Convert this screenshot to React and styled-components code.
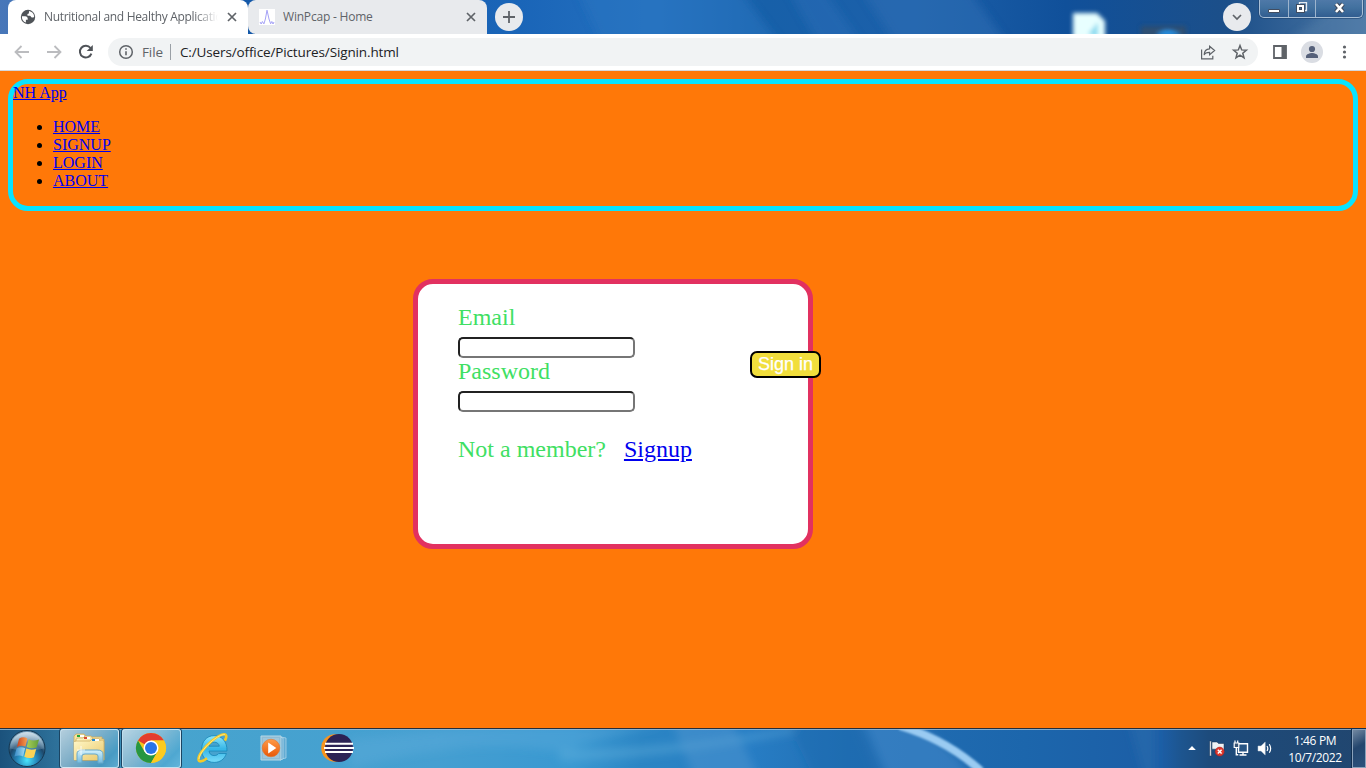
import React from "react";
import styled, { createGlobalStyle, css } from "styled-components";

const uiFont = `"Open Sans", "Noto Sans", sans-serif`;

const GlobalStyle = createGlobalStyle`
  * { box-sizing: border-box; }
  body { margin: 0; overflow: hidden; font-family: "Liberation Serif", serif; }
`;

const Screen = styled.div`
  width: 1366px;
  height: 768px;
  display: flex;
  flex-direction: column;
  overflow: hidden;
`;

/* ---------- Tab strip ---------- */

const TabStrip = styled.div`
  position: relative;
  flex: 0 0 34px;
  display: flex;
  padding-left: 8px;
  background: #1a63b5;
  overflow: hidden;
`;

const Backdrop = styled.svg`
  position: absolute;
  inset: 0;
  display: block;
`;

const Tab = styled.div`
  position: relative;
  display: flex;
  align-items: center;
  width: ${(p) => p.$width}px;
  height: 34px;
  padding: 0 10px 0 ${(p) => (p.$active ? 12 : 11)}px;
  background: ${(p) => (p.$active ? "#fff" : "linear-gradient(#fff, #fff) 0 0 / 0 0, #e8eaed")};
  border-radius: ${(p) => (p.$active ? "8px 8px 0 0" : "8px 8px 0 8px")};
`;

const TabTitle = styled.span`
  flex: 1;
  min-width: 0;
  margin-left: 8px;
  overflow: hidden;
  white-space: nowrap;
  font: 12px/16px ${uiFont};
  letter-spacing: ${(p) => p.$spacing}px;
  color: #5f6368;
  ${(p) => p.$fade && css`
    mask-image: linear-gradient(90deg, #000 calc(100% - 24px), transparent);
  `}
`;

const CloseGlyph = styled.svg`
  flex: none;
  margin-left: 8px;
`;

const RoundButton = styled.div`
  position: relative;
  display: flex;
  align-items: center;
  justify-content: center;
  flex: none;
  width: 28px;
  height: 28px;
  margin: 3px 0 0 ${(p) => p.$left || 0}px;
  border-radius: 50%;
  background: #e8eaed;
`;

const StripSpacer = styled.div`
  flex: 1;
`;

const WindowControls = styled.div`
  position: relative;
  display: flex;
  flex: none;
  width: 104px;
  height: 18px;
  margin: 0 3px 0 8px;
  border: 1px solid #a9bfd6;
  border-top: 0;
  border-radius: 0 0 5px 5px;
  background: linear-gradient(#4f79a8, #42719f 45%, #315d90);
  box-shadow: 0 0 0 1px #1c3f6b88;
`;

const ControlCell = styled.div`
  display: flex;
  align-items: center;
  justify-content: center;
  width: ${(p) => p.$width}px;
  padding-bottom: 2px;
  border-right: ${(p) => (p.$last ? "0" : "1px solid #9db4cd")};
`;

/* ---------- Toolbar ---------- */

const Toolbar = styled.div`
  flex: 0 0 37px;
  display: flex;
  align-items: center;
  padding: 0 12px 0 12px;
  border-bottom: 1px solid #d5d7da;
  background: #fff;
`;

const NavIcons = styled.div`
  display: flex;
  gap: 12px;
  width: 96px;
`;

const AddressBar = styled.div`
  display: flex;
  align-items: center;
  width: 1150px;
  height: 28px;
  padding: 0 9px;
  border-radius: 14px;
  background: #f1f3f4;
  font: 13.5px/18px ${uiFont};
`;

const Scheme = styled.span`
  margin-left: 7px;
  letter-spacing: -0.1px;
  color: #5f6368;
`;

const SchemeDivider = styled.span`
  width: 1px;
  height: 16px;
  margin: 0 9px 0 7px;
  background: #9aa0a6;
`;

const Address = styled.span`
  flex: 1;
  letter-spacing: -0.13px;
  color: #202124;
`;

const AddressActions = styled.div`
  display: flex;
  gap: 14px;
`;

const BrowserActions = styled.div`
  display: flex;
  align-items: center;
  flex: 1;
  justify-content: space-between;
  padding-left: 13px;
`;

const Avatar = styled.div`
  display: flex;
  width: 22px;
  height: 22px;
  margin-right: 2px;
  border-radius: 50%;
  background: #dadde3;
`;

/* ---------- Web page ---------- */

const Page = styled.main`
  flex: 0 0 657px;
  padding: 8px;
  background: #ff7808;
`;

const SiteHeader = styled.header`
  width: 1350px;
  height: 132px;
  border: 5px solid #08e3ff;
  border-radius: 20px;
  font-size: 16px;
  line-height: 18px;
`;

const Link = styled.a`
  color: #0000ee;
  text-decoration: underline;
`;

const Menu = styled.ul`
  margin: 16px 0;
  padding-left: 40px;
`;

const Card = styled.form`
  position: relative;
  width: 400px;
  height: 270px;
  margin: 68px 0 0 405px;
  padding: 20px 40px;
  border: 5px solid #e23160;
  border-radius: 20px;
  background: #fff;
  color: #40df63;
  font-size: 24px;
  line-height: 27px;
`;

const Label = styled.label`
  display: block;
`;

const Field = styled.input`
  display: block;
  width: 177px;
  height: 21px;
  margin: 6px 0 0;
  padding: 1px 2px;
  border: 2px inset #767676;
  border-radius: 5px;
  background: #fff;
`;

const MemberRow = styled.div`
  display: flex;
  gap: 18px;
  margin-top: 24px;
  white-space: nowrap;
`;

const SignInButton = styled.button`
  position: absolute;
  top: 67px;
  left: 332px;
  width: 71px;
  height: 27px;
  padding: 0;
  border: 2px solid #000;
  border-radius: 7px;
  background: #f1de3c;
  color: #fff;
  font: 18px/21px "Liberation Sans", Arial, sans-serif;
  -webkit-text-stroke: 0.25px #fff;
  white-space: nowrap;
`;

/* ---------- Taskbar ---------- */

const Taskbar = styled.footer`
  position: relative;
  flex: 0 0 40px;
  display: flex;
  background: #2878bb;
  overflow: hidden;
`;

const StartButton = styled.div`
  position: relative;
  width: 54px;
  height: 40px;
  margin-right: 6px;
`;

const TaskItem = styled.div`
  position: relative;
  display: flex;
  align-items: center;
  justify-content: center;
  width: 59px;
  height: 39px;
  margin: 1px 3px 0 0;
  padding: 0 2px 1px 0;
  border-radius: 3px;
  ${(p) => p.$open && css`
    border: 1px solid #e1f1f9bb;
    box-shadow: 0 0 0 1px #1b4563;
    background: linear-gradient(135deg, #d5e5edcc, #9fc6d9aa 45%, #58acd477 80%, #7bc3e588);
  `}
`;

const TaskSpacer = styled.div`
  flex: 1;
`;

const Tray = styled.div`
  position: relative;
  display: flex;
  align-items: center;
  width: 92px;
  padding-top: 2px;
`;

const Clock = styled.div`
  position: relative;
  width: 74px;
  padding-top: 4px;
  color: #fff;
  text-align: center;
  font: 12px/17px ${uiFont};
  letter-spacing: -0.35px;
`;

const ShowDesktop = styled.div`
  position: relative;
  width: 14px;
  margin: 1px 0 0;
  border: 1px solid #8ba2bb;
  outline: 1px solid #102e50;
  background: linear-gradient(150deg, #7288a1, #24466e 45%, #2b517c);
`;

function StripBackdrop() {
  return (
    <Backdrop width="1366" height="34" aria-hidden="true">
      <defs>
        <linearGradient id="strip">
          <stop offset="0" stopColor="#4877b9" />
          <stop offset=".18" stopColor="#1458a8" />
          <stop offset=".38" stopColor="#1a65b8" />
          <stop offset=".48" stopColor="#2571bf" />
          <stop offset=".56" stopColor="#1760a9" />
          <stop offset=".67" stopColor="#1c60aa" />
          <stop offset=".78" stopColor="#10509a" />
          <stop offset=".9" stopColor="#1c4f89" />
          <stop offset="1" stopColor="#4d78a5" />
        </linearGradient>
        <filter id="soft" x="-30%" y="-30%" width="160%" height="160%"><feGaussianBlur stdDeviation="4" /></filter>
        <filter id="iconSoft" x="-50%" y="-50%" width="200%" height="200%"><feGaussianBlur stdDeviation="2.2" /></filter>
      </defs>
      <rect width="1366" height="34" fill="url(#strip)" />
      <g filter="url(#soft)">
        <path d="M575-15H735L785 50H605Z" fill="#2c76c2" opacity=".5" />
        <path d="M785-15H820L866 50H822Z" fill="#2d73bc" opacity=".4" />
        <path d="M858-15H965L1012 50H900Z" fill="#2e6eb5" opacity=".55" />
        <path d="M1290 40L1350-5H1380V40Z" fill="#5a83ac" opacity=".4" />
      </g>
      <g filter="url(#iconSoft)">
        <path d="M1073 13H1097L1105 21V46H1073Z" fill="#e8ffff" />
        <path d="M1088 34L1098 22V38Z" fill="#8fdcf0" />
        <path d="M1141 26H1186V38H1141Z" fill="#334f6a" opacity=".8" />
        <path d="M1156 35Q1167 26 1181 35Z" fill="#219cf5" />
      </g>
    </Backdrop>
  );
}

function TaskBackdrop() {
  return (
    <Backdrop width="1366" height="40" aria-hidden="true">
      <defs>
        <linearGradient id="bar">
          <stop offset="0" stopColor="#1b527c" />
          <stop offset=".04" stopColor="#2d7099" />
          <stop offset=".12" stopColor="#47a4ce" />
          <stop offset=".32" stopColor="#459fd1" />
          <stop offset=".42" stopColor="#3998d1" />
          <stop offset=".47" stopColor="#2b85c4" />
          <stop offset=".55" stopColor="#277dc4" />
          <stop offset=".62" stopColor="#226fb4" />
          <stop offset=".75" stopColor="#1c66ac" />
          <stop offset=".85" stopColor="#1c5ea6" />
          <stop offset=".865" stopColor="#1d558f" />
          <stop offset=".885" stopColor="#1d4b7c" />
          <stop offset="1" stopColor="#21466f" />
        </linearGradient>
        <filter id="barSoft" x="-20%" y="-50%" width="140%" height="200%"><feGaussianBlur stdDeviation="4" /></filter>
        <filter id="raySoft" x="-20%" y="-20%" width="140%" height="140%"><feGaussianBlur stdDeviation="1.3" /></filter>
      </defs>
      <rect width="1366" height="40" fill="url(#bar)" />
      <g filter="url(#barSoft)">
        <path d="M350 40Q470 8 560 24Q620 5 665-2H540Q440 1 350 12Z" fill="#62b1df" opacity=".3" />
        <path d="M560 21Q650 24 800-2L794 5Q670 30 560 33Z" fill="#6db8df" opacity=".35" />
        <path d="M670-10H730L760 52H695Z" fill="#599bd2" opacity=".38" />
        <path d="M785-10L815 52H880L855-10Z" fill="#1c6aad" opacity=".4" />
        <path d="M862-10H910Q950 17 974 52H888Z" fill="#4a91d1" opacity=".45" />
        <path d="M1128-10H1155V52H1145Z" fill="#3775b3" opacity=".35" />
      </g>
      <path d="M900 -2Q947 12 981 43" fill="none" stroke="#9acbf2" strokeWidth="8" filter="url(#raySoft)" />
      <rect width="1366" height="1" fill="#252d3b" />
      <rect y="1" width="1366" height="1" fill="#9dbbd1" opacity=".8" />
    </Backdrop>
  );
}

const Close = () => (
  <CloseGlyph width="12" height="12" viewBox="0 0 12 12" fill="none" stroke="#5f6368" strokeWidth="1.7">
    <path d="M2 2l8 8M10 2l-8 8" />
  </CloseGlyph>
);

const Globe = () => (
  <svg width="16" height="16" viewBox="0 0 16 16">
    <circle cx="8" cy="8" r="7.2" fill="#4f5358" />
    <path d="M1.9 7.3h3.4c1.5 0 2.4 1 2.4 2.3v1.1H5.9v2.9C3.3 12.8 1.7 10.3 1.9 7.3ZM9 2c2.9.4 5 2.7 5.2 5.7-.6.7-1.2.9-2.1.8-1.5 0-1-1.8-2.2-1.8H7.7c-.8-1-.3-2.2 1.2-2.2Z" fill="#fff" />
  </svg>
);

const Pulse = () => (
  <svg width="16" height="16" viewBox="0 0 16 16">
    <path fill="#fff" d="M0 0h16v16H0z" />
    <path d="M1 13l1.2 2 1.2-2.5 1.5 2.4L6.4 10 8 1.2 10 10l1.6 4.8 1.2-2.3L14 15l1-2" fill="none" stroke="#a5a2f7" strokeWidth="1" />
  </svg>
);

const Arrow = ({ flip }) => (
  <svg width="20" height="20" viewBox="0 0 20 20" fill="none" stroke="#bbbcbf" strokeWidth="1.8">
    <path d={flip ? "M3 10h13M10.5 4l6 6-6 6" : "M17 10H4M9.5 4l-6 6 6 6"} />
  </svg>
);

const Reload = () => (
  <svg width="20" height="20" viewBox="0 0 20 20">
    <path d="M15.4 11.6A5.9 5.9 0 1 1 14.5 6" fill="none" stroke="#4f5358" strokeWidth="2" />
    <path d="M16.8 3v6.1h-6.1Z" fill="#4f5358" />
  </svg>
);

const Info = () => (
  <svg width="18" height="18" viewBox="0 0 18 18">
    <circle cx="9" cy="9" r="6.3" fill="none" stroke="#5f6368" strokeWidth="1.5" />
    <path d="M9 8.2v4.1M9 5.3v1.5" stroke="#5f6368" strokeWidth="1.6" />
  </svg>
);

const Share = () => (
  <svg width="18" height="18" viewBox="0 0 18 18" fill="none" stroke="#5f6368" strokeWidth="1.2">
    <path d="M2.6 6.5v9.3h11.2v-3M10.6 3.3l5 4.2-5 4.2V9.3c-3.1 0-4.8.8-5.5 2.7.1-3.8 2.1-6 5.5-6.2Z" />
  </svg>
);

const Star = () => (
  <svg width="18" height="18" viewBox="0 0 18 18">
    <path d="M9 2.5l1.7 4.4 4.7.3-3.6 3 1.2 4.6L9 12.2l-4 2.6 1.2-4.6-3.6-3 4.7-.3Z" fill="none" stroke="#5f6368" strokeWidth="1.5" />
  </svg>
);

const StartOrb = () => (
  <svg width="54" height="40" viewBox="0 0 54 40">
    <defs>
      <radialGradient id="orb" cx=".5" cy=".83" r=".72">
        <stop offset="0" stopColor="#49e5fc" /><stop offset=".38" stopColor="#2688bc" />
        <stop offset=".7" stopColor="#1d486b" /><stop offset="1" stopColor="#6d98b4" />
      </radialGradient>
      <linearGradient id="orbShine" x2="0" y2="1"><stop stopColor="#e3edf3" stopOpacity=".85" /><stop offset="1" stopColor="#acc9dc" stopOpacity=".15" /></linearGradient>
      <linearGradient id="flagRed"><stop stopColor="#c84320" /><stop offset="1" stopColor="#f9a150" /></linearGradient>
      <linearGradient id="flagGreen"><stop stopColor="#a8cf58" /><stop offset="1" stopColor="#629e39" /></linearGradient>
      <linearGradient id="flagBlue"><stop stopColor="#398bc7" /><stop offset="1" stopColor="#9fdbf3" /></linearGradient>
    </defs>
    <circle cx="27" cy="20.5" r="18" fill="url(#orb)" stroke="#163852" />
    <path d="M10 20.5a17 16.5 0 0 1 34 0Q27 25 10 20.5Z" fill="url(#orbShine)" />
    <path d="M19 10.7q4.2-2.6 8.4-.1l-2 8q-4.4-1.7-8.4.3Z" fill="url(#flagRed)" />
    <path d="M28.7 11.2q4 2.3 10.4.2l-2.5 8.2q-5.4 1.6-9.9-.6Z" fill="url(#flagGreen)" />
    <path d="M16.5 20.4q4.3-2 8.6-.1l-2 8.2q-3.8-2.1-8.7.1Z" fill="url(#flagBlue)" />
    <path d="M26.3 20.6q4.5 1.9 9.9.4l-2.3 8.2q-5 2-9.6-.5Z" fill="#fbd356" />
  </svg>
);

const FolderIcon = () => (
  <svg width="36" height="32" viewBox="0 0 36 32">
    <defs>
      <linearGradient id="folder" x2="1" y2="1"><stop stopColor="#fff6c5" /><stop offset="1" stopColor="#eac96c" /></linearGradient>
      <linearGradient id="stand" x2="0" y2="1"><stop stopColor="#d4f2fd" /><stop offset="1" stopColor="#72b9dd" /></linearGradient>
    </defs>
    <path d="M3 28V4l2-2h8l2 3h16v23Z" fill="#f6e3a1" stroke="#c9ab60" strokeWidth=".8" />
    <path d="M5 28V7l2-1h5l2-2h6l2 3h11v21Z" fill="url(#folder)" stroke="#c9ab60" strokeWidth=".7" />
    <path d="M4 28V9h15l2-2h7l1 2h4v19Z" fill="url(#folder)" stroke="#c9ab60" strokeWidth=".7" />
    <path d="M3 28V10h17l2-1h10v19Z" fill="url(#folder)" />
    <path d="M6 3h3v2H6z" fill="#1fa83c" /><path d="M9 3h4v2H9z" fill="#fff" />
    <path d="M13 5h3v2h-3z" fill="#d94a35" /><path d="M16 5h3v2h-3z" fill="#fff" />
    <path d="M21 7h3v2h-3z" fill="#2488cf" /><path d="M24 7h4v2h-4z" fill="#fff" />
    <path d="M6 31V22q0-4 5-4h15q6 0 6 4v9h-5v-7q0-2-3-2H14q-3 0-3 2v7Z" fill="url(#stand)" stroke="#66a8ca" />
    <path d="M10 14v9M6 18h8" stroke="#fff" opacity=".8" />
  </svg>
);

const ChromeIcon = () => (
  <svg width="32" height="32" viewBox="0 0 32 32">
    <circle cx="16" cy="16" r="15" fill="#f7c51d" />
    <path d="M16 16L3 8.5A15 15 0 0 1 29 8.5H16Z" fill="#e33c2e" />
    <path d="M3 8.5L9.6 19.8 16 16l6.5 3.8L16 31A15 15 0 0 1 3 8.5Z" fill="#269642" />
    <path d="M16 8.5h13A15 15 0 0 1 16 31l6.5-11.2Z" fill="#fccb20" />
    <circle cx="16" cy="16" r="7.5" fill="#fff" />
    <circle cx="16" cy="16" r="6" fill="#2874e8" />
  </svg>
);

const ExplorerIcon = () => (
  <svg width="34" height="34" viewBox="0 0 34 34">
    <defs><linearGradient id="ie" x2="0" y2="1"><stop stopColor="#8fe8fc" /><stop offset=".5" stopColor="#35b5e6" /><stop offset="1" stopColor="#79dcfa" /></linearGradient></defs>
    <path d="M31 20H13c.5 3 2.3 4.6 5.1 4.6 2.2 0 3.6-.9 4.6-2.1h7.7c-1.9 5.7-6.3 8.9-12.3 8.9C10.6 31.4 5.6 26.2 5.6 18.5S10.5 4.7 18 4.7c8 0 13.3 5.9 13 15.3ZM13 15.2h10.3c-.4-2.6-2.3-4-5-4-2.8 0-4.6 1.4-5.3 4Z" fill="url(#ie)" stroke="#1685b7" strokeWidth=".8" />
    <path d="M11 27.2C6 31 3 31 2.5 29 1.6 25.3 7.8 16.5 16 9.7c7-5.7 13-8 14.1-5.4.6 1.3 0 3-1.2 5.3" fill="none" stroke="#f6ca27" strokeWidth="2.6" />
    <path d="M3 28C3.3 23 10 14.5 18 8.5 23 4.8 27 3.1 29 3.7" fill="none" stroke="#fff09b" strokeWidth=".8" />
  </svg>
);

const MediaIcon = () => (
  <svg width="30" height="30" viewBox="0 0 30 30">
    <defs><linearGradient id="media" x2="0" y2="1"><stop stopColor="#ff9b48" /><stop offset="1" stopColor="#e85808" /></linearGradient></defs>
    <path d="M21 4l5 1v20l-5 1Z" fill="#62abd3" stroke="#a8d3e8" strokeWidth=".8" />
    <path d="M20 4l3 1v21l-3 1Z" fill="#5ca5ce" stroke="#b9dced" strokeWidth=".8" />
    <path d="M1 3h20v24H1Z" fill="#8ebdd6" stroke="#b7d8e6" />
    <path d="M3 5h16v20H3Z" fill="#a7cadb" opacity=".7" />
    <circle cx="11" cy="15" r="8.8" fill="url(#media)" stroke="#e1742b" strokeWidth=".6" />
    <path d="M8.2 9.5v11l8.1-5.5Z" fill="#fff" />
  </svg>
);

const EclipseIcon = () => (
  <svg width="34" height="32" viewBox="0 0 34 32">
    <circle cx="15" cy="16" r="13.8" fill="#f7941e" />
    <circle cx="19" cy="16" r="14" fill="#2c2255" />
    <path d="M5 11.8h28M4 15.9h30M5 20h28" stroke="#fff" strokeWidth="2" />
  </svg>
);

const TrayIcons = () => (
  <svg width="92" height="30" viewBox="0 0 92 30">
    <path d="M2.2 16L6 12l3.8 4Z" fill="#fff" />
    <g stroke="#173252" strokeWidth=".5">
      <path d="M23.7 7h1.6v15h-1.6Z" fill="#fff" />
      <path d="M26 8h5l1.5 1.5H38v7H32l-1.5-1.3H26Z" fill="#eef2f5" />
      <circle cx="33.7" cy="17.6" r="4.5" fill="#df382c" stroke="#a82322" />
    </g>
    <path d="M31.8 15.7l3.8 3.8M35.6 15.7l-3.8 3.8" stroke="#fff" strokeWidth="1.5" />
    <path d="M53 9.7h8.5v8.5h-9V14" fill="#285584" stroke="#fff" strokeWidth="1.4" />
    <path d="M57 18v3M53.5 21h7M50.3 13v7.8h2" fill="none" stroke="#fff" strokeWidth="1.4" />
    <path d="M48.2 9h4.6v4.5h-4.6ZM49 6.5V9M51.7 6.5V9" fill="#3a5677" stroke="#fff" strokeWidth="1.2" />
    <path d="M72 12h3l4.2-4v13L75 17h-3Z" fill="#fff" stroke="#c0ccd8" strokeWidth=".5" />
    <path d="M81 12q1.6 2.5 0 5M83.3 10.3q2.7 4.2 0 8.4" fill="none" stroke="#fff" strokeWidth="1.2" />
  </svg>
);

export default function App() {
  return (
    <Screen>
      <GlobalStyle />
      <TabStrip>
        <StripBackdrop />
        <Tab $active $width={240}>
          <Globe />
          <TabTitle $fade $spacing={-0.32}>Nutritional and Healthy Application</TabTitle>
          <Close />
        </Tab>
        <Tab $width={239}>
          <Pulse />
          <TabTitle $spacing={-0.2}>WinPcap - Home</TabTitle>
          <Close />
        </Tab>
        <RoundButton $left={8}>
          <svg width="14" height="14" viewBox="0 0 14 14" stroke="#5f6368" strokeWidth="1.8"><path d="M1 7h12M7 1v12" /></svg>
        </RoundButton>
        <StripSpacer />
        <RoundButton>
          <svg width="12" height="12" viewBox="0 0 12 12" fill="none" stroke="#5f6368" strokeWidth="1.7"><path d="M2 4l4 4 4-4" /></svg>
        </RoundButton>
        <WindowControls>
          <ControlCell $width={29}>
            <svg width="12" height="14" viewBox="0 0 12 14"><path d="M.5 8.5h11v3H.5Z" fill="#fff" stroke="#414d60" /></svg>
          </ControlCell>
          <ControlCell $width={27}>
            <svg width="12" height="12" viewBox="0 0 12 12" fill="none"><path d="M3.5 2.5v-2h7v8h-2" stroke="#e4e9ef" strokeWidth="1.3" /><path d="M2 4h5v5H2Z" stroke="#414d60" strokeWidth="4" /><path d="M2 4h5v5H2Z" stroke="#fff" strokeWidth="2" /></svg>
          </ControlCell>
          <ControlCell $width={46} $last>
            <svg width="13" height="12" viewBox="0 0 13 12" fill="none"><path d="M3 2l7 8M10 2l-7 8" stroke="#3e4859" strokeWidth="4.5" /><path d="M3 2l7 8M10 2l-7 8" stroke="#fff" strokeWidth="2.6" /></svg>
          </ControlCell>
        </WindowControls>
      </TabStrip>

      <Toolbar>
        <NavIcons><Arrow /><Arrow flip /><Reload /></NavIcons>
        <AddressBar>
          <Info />
          <Scheme>File</Scheme>
          <SchemeDivider />
          <Address>C:/Users/office/Pictures/Signin.html</Address>
          <AddressActions><Share /><Star /></AddressActions>
        </AddressBar>
        <BrowserActions>
          <svg width="18" height="18" viewBox="0 0 18 18"><path d="M3 3h12v12H3Z" fill="none" stroke="#5f6368" strokeWidth="1.8" /><path d="M10.5 3H15v12h-4.5Z" fill="#5f6368" /></svg>
          <Avatar>
            <svg width="22" height="22" viewBox="0 0 22 22"><circle cx="11" cy="8" r="3.1" fill="#56617a" /><path d="M5 17v-1.5c0-2.2 3.8-3.4 6-3.4s6 1.2 6 3.4V17Z" fill="#56617a" /></svg>
          </Avatar>
          <svg width="18" height="18" viewBox="0 0 18 18" fill="#5f6368"><circle cx="8.5" cy="4" r="1.6" /><circle cx="8.5" cy="9" r="1.6" /><circle cx="8.5" cy="14" r="1.6" /></svg>
        </BrowserActions>
      </Toolbar>

      <Page>
        <SiteHeader>
          <Link href="#">NH App</Link>
          <Menu>
            {["HOME", "SIGNUP", "LOGIN", "ABOUT"].map((item) => (
              <li key={item}><Link href="#">{item}</Link></li>
            ))}
          </Menu>
        </SiteHeader>
        <Card>
          <Label htmlFor="email">Email</Label>
          <Field id="email" type="email" />
          <Label htmlFor="password">Password</Label>
          <Field id="password" type="password" />
          <MemberRow><span>Not a member?</span><Link href="#">Signup</Link></MemberRow>
          <SignInButton type="button">Sign in</SignInButton>
        </Card>
      </Page>

      <Taskbar>
        <TaskBackdrop />
        <StartButton><StartOrb /></StartButton>
        <TaskItem $open><FolderIcon /></TaskItem>
        <TaskItem $open><ChromeIcon /></TaskItem>
        <TaskItem><ExplorerIcon /></TaskItem>
        <TaskItem><MediaIcon /></TaskItem>
        <TaskItem><EclipseIcon /></TaskItem>
        <TaskSpacer />
        <Tray><TrayIcons /></Tray>
        <Clock>1:46 PM<br />10/7/2022</Clock>
        <ShowDesktop />
      </Taskbar>
    </Screen>
  );
}
